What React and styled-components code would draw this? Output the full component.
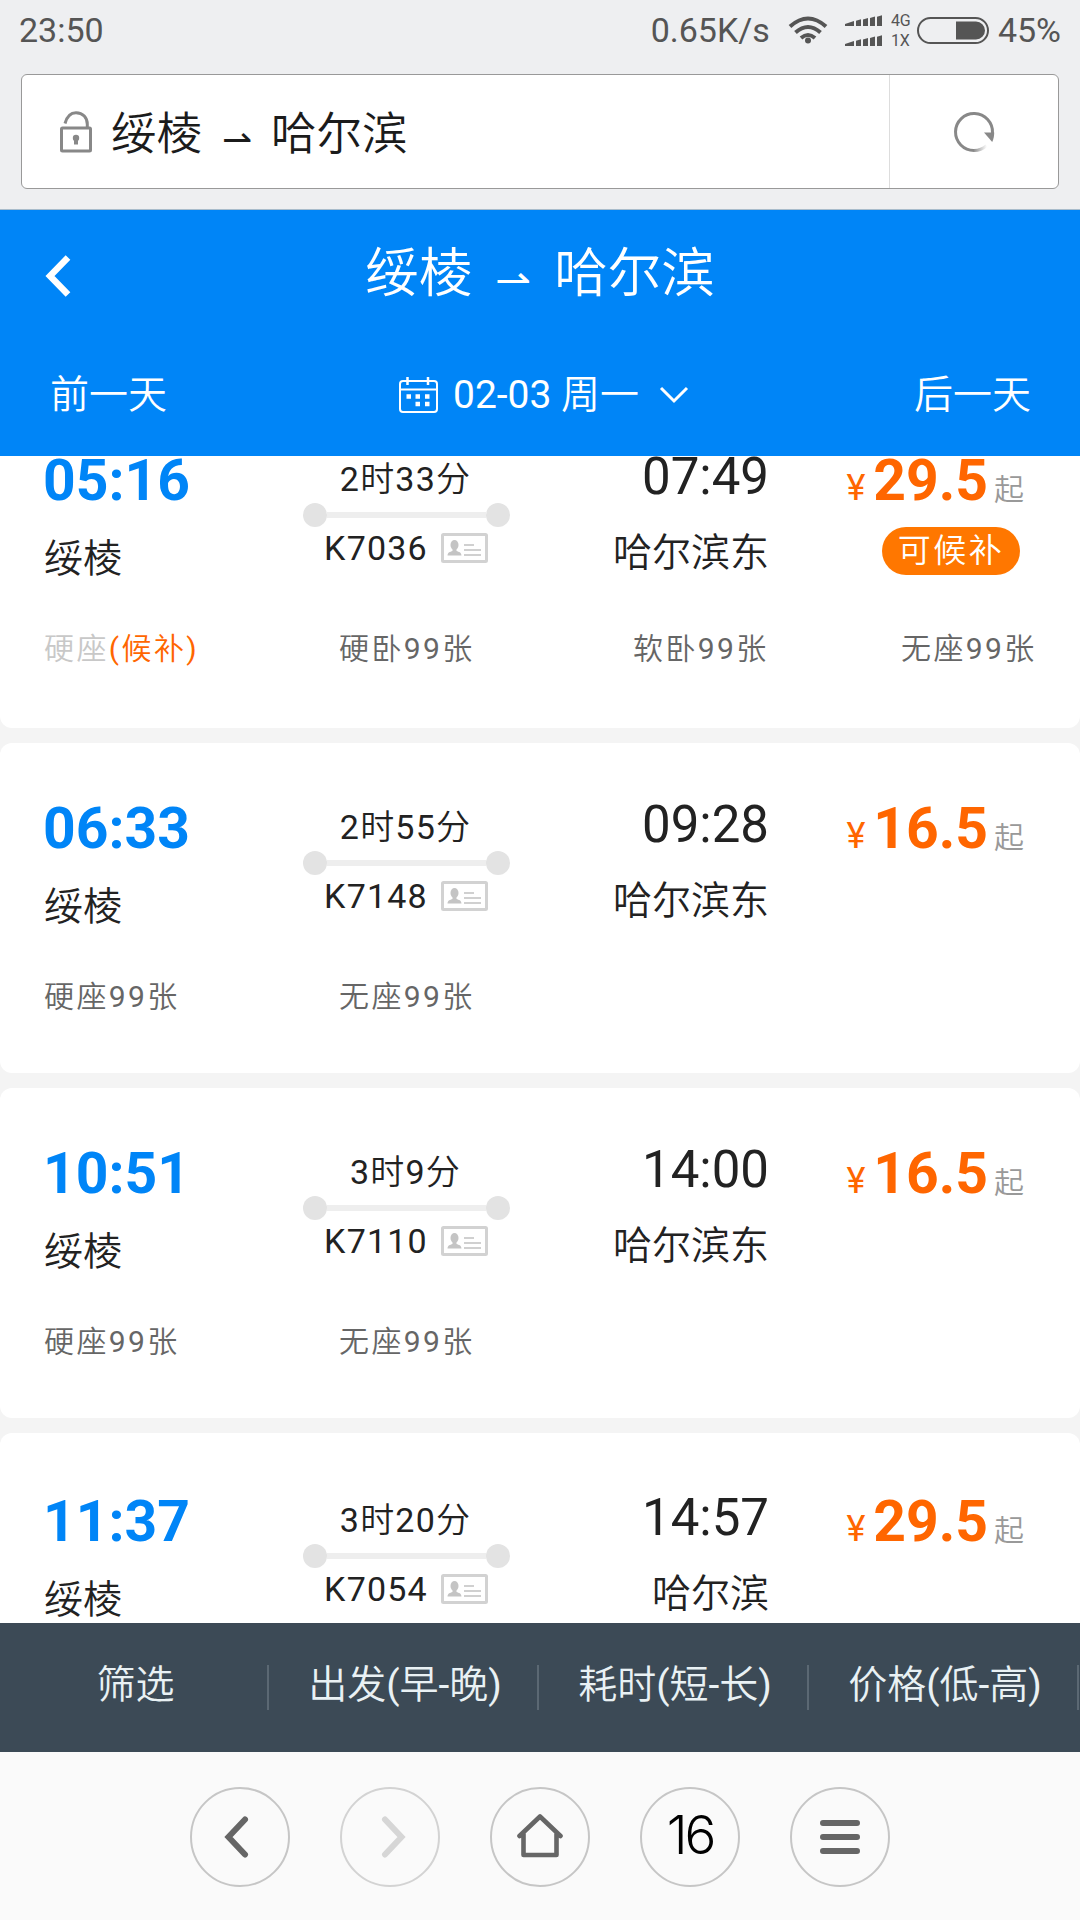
import React from "react";
import styled, { createGlobalStyle } from "styled-components";

const GlobalStyle = createGlobalStyle`
  * {
    box-sizing: border-box;
  }
  body {
    margin: 0;
    background: #f4f4f4;
    font-family: Roboto, "Noto Sans CJK SC DemiLight", "Noto Sans CJK SC", sans-serif;
    font-weight: 400;
    color: #222;
  }
`;

const Screen = styled.div`
  width: 1080px;
  height: 1920px;
  display: flex;
  flex-direction: column;
  overflow: hidden;
`;

const StatusBar = styled.div`
  height: 74px;
  flex: none;
  display: flex;
  align-items: flex-start;
  background: #eeeff1;
  padding: 10px 19px 0;
  font-size: 34px;
  line-height: 41px;
  color: #555;
`;

const Clock = styled.div`
  flex: 1;
`;

const Networks = styled.div`
  display: flex;
  flex-direction: column;
  gap: 4px;
  margin: 3px 0 0 8px;
  font-size: 16px;
  line-height: 16px;
  width: 26px;
`;

const StatusIcon = styled.svg`
  display: block;
  flex: none;
  margin-left: ${({ $left }) => $left}px;
`;

const Percent = styled.div`
  margin-left: 9px;
`;

const AddressArea = styled.div`
  flex: none;
  height: 136px;
  background: #eeeff1;
  border-bottom: 1px solid #a9bccb;
  padding: 0 21px;
`;

const AddressBox = styled.div`
  height: 115px;
  display: flex;
  background: #fff;
  border: 1px solid #999;
  border-radius: 6px;
`;

const AddressText = styled.div`
  flex: 1;
  display: flex;
  align-items: center;
  padding-left: 38px;
  color: #1b1b1b;
  gap: 19px;
`;

const PageName = styled.div`
  font-size: 45.5px;
  font-weight: 350;
  line-height: 66px;
  padding-top: 6px;
`;

const Reload = styled.div`
  width: 169px;
  border-left: 1px solid #ddd;
  display: flex;
  align-items: center;
  justify-content: center;
`;

const Arrow = styled.span`
  display: inline-block;
  width: ${({ $width }) => $width}px;
  text-align: center;
  font-family: "DejaVu Sans", sans-serif;
  font-size: 0.8em;
  line-height: 1;
  vertical-align: -0.07em;
`;

const Header = styled.header`
  flex: none;
  height: 246px;
  background: #0085f7;
  color: #fff;
`;

const TitleRow = styled.div`
  height: 123px;
  display: grid;
  grid-template-columns: 120px 1fr 120px;
`;

const BackButton = styled.div`
  padding: 45px 0 0 45px;
`;

const Title = styled.div`
  text-align: center;
  font-size: 53.5px;
  font-weight: 350;
  line-height: 80px;
  padding-top: 24px;
`;

const DateRow = styled.div`
  height: 123px;
  display: grid;
  grid-template-columns: 300px 1fr 300px;
  align-items: start;
  padding: 32px 49px 0 50px;
  font-size: 39px;
  font-weight: 350;
  line-height: 60px;
`;

const DayLink = styled.div`
  text-align: ${({ $align }) => $align || "left"};
`;

const CurrentDay = styled.div`
  display: flex;
  align-items: center;
  padding-left: 49px;
`;

const DayText = styled.span`
  margin: 0 20px 0 14px;
`;

const DateDigits = styled.span`
  font-weight: 400;
`;

const List = styled.div`
  flex: 1;
  min-height: 0;
  overflow: hidden;
  display: flex;
  flex-direction: column;
  gap: 15px;
`;

const Card = styled.div`
  flex: none;
  height: ${({ $height }) => $height || 330}px;
  margin-top: ${({ $scrolled }) => $scrolled || 0}px;
  background: #fff;
  border-radius: 12px;
  padding: ${({ $top }) => $top || 52}px 0 0 43px;
`;

const Trip = styled.div`
  display: grid;
  grid-template-columns: 260px 207px 259px 1fr;
  height: 163px;
`;

const Departure = styled.div`
  display: flex;
  flex-direction: column;
`;

const DepartTime = styled.div`
  font-size: 57px;
  font-weight: 700;
  line-height: 68px;
  color: #0085f7;
`;

const Station = styled.div`
  font-size: 39px;
  font-weight: 350;
  line-height: 58px;
  margin-top: ${({ $top }) => $top}px;
  padding-left: 1px;
`;

const Middle = styled.div`
  display: flex;
  flex-direction: column;
  align-items: center;
  font-size: 34px;
  letter-spacing: 1.2px;
`;

const Duration = styled.div`
  line-height: 48px;
  margin-top: 8px;
  margin-right: 2px;
`;

const Track = styled.div`
  width: 207px;
  height: 24px;
  display: flex;
  align-items: center;
`;

const Stop = styled.div`
  width: 24px;
  height: 24px;
  border-radius: 50%;
  background: #e3e3e3;
`;

const Rail = styled.div`
  flex: 1;
  height: 6px;
  background: #eee;
`;

const TrainNo = styled.div`
  display: flex;
  align-items: center;
  gap: 13px;
  line-height: 40px;
  margin: 1px 0 0 -1px;
`;

const Arrival = styled.div`
  display: flex;
  flex-direction: column;
  align-items: flex-end;
`;

const ArriveTime = styled.div`
  font-size: 51px;
  line-height: 60px;
`;

const PriceColumn = styled.div`
  display: flex;
  flex-direction: column;
  align-items: flex-end;
  padding-right: 56px;
`;

const Price = styled.div`
  display: flex;
  align-items: baseline;
  line-height: 68px;
  color: #ff6600;
`;

const Currency = styled.span`
  font-size: 36px;
`;

const Amount = styled.span`
  font-size: 57px;
  font-weight: 700;
  margin: 0 6px 0 8px;
`;

const From = styled.span`
  font-size: 30px;
  font-weight: 350;
  color: #999;
`;

const Waitlist = styled.div`
  width: 138px;
  height: 48px;
  border-radius: 24px;
  background: #ff7700;
  color: #fff;
  font-size: 33px;
  font-weight: 350;
  letter-spacing: 2.5px;
  line-height: 48px;
  text-align: center;
  margin: 3px 4px 0 0;
`;

const Seats = styled.div`
  display: grid;
  grid-template-columns: 295px 294px 268px 1fr;
  font-size: 30px;
  letter-spacing: 2.4px;
  line-height: 44px;
  color: #666;
  padding: 17px 0 0 1px;
`;

const SoldOut = styled.span`
  color: #c8c8c8;
`;

const Standby = styled.span`
  color: #ff6600;
`;

const SortBar = styled.div`
  flex: none;
  height: 129px;
  display: grid;
  grid-template-columns: 269px repeat(3, 270px);
  align-items: center;
  background: #3c4a56;
  color: #e9f1f4;
  font-size: 39px;
`;

const SortItem = styled.div`
  height: 45px;
  line-height: 40px;
  text-align: center;
  padding-left: 4px;
  border-right: 2px solid #5b6873;
`;

const NavBar = styled.div`
  flex: none;
  height: 168px;
  background: #fafafa;
  display: flex;
  justify-content: center;
  gap: 50px;
  padding-top: 35px;
`;

const NavButton = styled.div`
  width: 100px;
  height: 100px;
  border-radius: 50%;
  border: 2px solid ${({ $muted }) => ($muted ? "#d3d3d3" : "#c6c6c6")};
  display: flex;
  align-items: center;
  justify-content: center;
`;

const TabCount = styled.span`
  font-family: Inter, sans-serif;
  font-size: 53px;
  font-weight: 350;
  line-height: 1;
  letter-spacing: -3px;
  padding-bottom: 3px;
  color: #000;
`;

const LockIcon = () => (
  <svg width="32" height="42" viewBox="0 0 32 42" fill="none" stroke="#888" strokeWidth="3">
    <path d="M5 12.5C7 5 11 1.7 16 1.7c7 0 11.3 5 11.3 11.5V17" />
    <rect x="1.5" y="17" width="29" height="23" rx="1" />
    <circle cx="16" cy="27" r="3.2" fill="#888" stroke="none" />
    <path d="M16 27v6.5" strokeWidth="4" />
  </svg>
);

const ReloadIcon = () => (
  <svg width="42" height="42" viewBox="0 0 42 42" fill="none">
    <defs>
      <linearGradient id="fade" x1="20" y1="0" x2="34" y2="0" gradientUnits="userSpaceOnUse">
        <stop offset="0" stopColor="#888" />
        <stop offset="1" stopColor="#fff" />
      </linearGradient>
    </defs>
    <path d="M39.5 22A18.5 18.5 0 1 0 21 39.5" stroke="#888" strokeWidth="3" />
    <path d="M21 39.5A18.5 18.5 0 0 0 33.5 34.6" stroke="url(#fade)" strokeWidth="3" />
    <path d="M31 21.5h10.2c0 3.5-.6 6.5-2 9.5z" fill="#888" />
  </svg>
);

const IdCard = () => (
  <svg width="47" height="30" viewBox="0 0 47 30" fill="none">
    <rect x="1.5" y="1.5" width="44" height="27" rx="1" stroke="#d2d2d2" strokeWidth="3" />
    <ellipse cx="13.5" cy="12" rx="4" ry="5" fill="#c4c4c4" />
    <path d="M6.5 22.5c.3-3.5 2.5-3.5 5-4.5v-3h4v3c2.5 1 4.7 1 5 4.5z" fill="#c4c4c4" />
    <path d="M23 12h10M23 17h17M23 22h17" stroke="#d0d0d0" strokeWidth="2" />
  </svg>
);

const trips = [
  {
    depart: "05:16",
    duration: "2时33分",
    train: "K7036",
    arrive: "07:49",
    to: "哈尔滨东",
    price: "29.5",
    waitlist: true,
    seats: ["硬座", "硬卧99张", "软卧99张", "无座99张"],
    height: 333,
    scrolled: -61,
  },
  {
    depart: "06:33",
    duration: "2时55分",
    train: "K7148",
    arrive: "09:28",
    to: "哈尔滨东",
    price: "16.5",
    seats: ["硬座99张", "无座99张"],
  },
  {
    depart: "10:51",
    duration: "3时9分",
    train: "K7110",
    arrive: "14:00",
    to: "哈尔滨东",
    price: "16.5",
    seats: ["硬座99张", "无座99张"],
  },
  {
    depart: "11:37",
    duration: "3时20分",
    train: "K7054",
    arrive: "14:57",
    to: "哈尔滨",
    price: "29.5",
    seats: [],
    top: 55,
  },
];

const TripCard = ({ trip }) => (
  <Card $height={trip.height} $scrolled={trip.scrolled} $top={trip.top}>
    <Trip>
      <Departure>
        <DepartTime>{trip.depart}</DepartTime>
        <Station $top={15}>绥棱</Station>
      </Departure>
      <Middle>
        <Duration>{trip.duration}</Duration>
        <Track>
          <Stop />
          <Rail />
          <Stop />
        </Track>
        <TrainNo>
          {trip.train}
          <IdCard />
        </TrainNo>
      </Middle>
      <Arrival>
        <ArriveTime>{trip.arrive}</ArriveTime>
        <Station $top={17}>{trip.to}</Station>
      </Arrival>
      <PriceColumn>
        <Price>
          <Currency>¥</Currency>
          <Amount>{trip.price}</Amount>
          <From>起</From>
        </Price>
        {trip.waitlist && <Waitlist>可候补</Waitlist>}
      </PriceColumn>
    </Trip>
    <Seats>
      {trip.seats.map((seat, i) =>
        trip.waitlist && i === 0 ? (
          <div key={seat}>
            <SoldOut>{seat}</SoldOut>
            <Standby>(候补)</Standby>
          </div>
        ) : (
          <div key={seat}>{seat}</div>
        )
      )}
    </Seats>
  </Card>
);

const signalBars = [1, 2, 3, 4];

const App = () => {
  return (
    <Screen>
      <GlobalStyle />
      <StatusBar>
        <Clock>23:50</Clock>
        <div>0.65K/s</div>
        <StatusIcon $left={18} width="40" height="41" viewBox="0 0 40 41" fill="none" stroke="#555" strokeWidth="4">
          <path d="M2 16.5Q20 .5 38 16.5M7.5 22.5Q20 11.5 32.5 22.5M13 28Q20 22 27 28" />
          <circle cx="20" cy="30.5" r="3" fill="#555" stroke="none" />
        </StatusIcon>
        <StatusIcon $left={17} width="38" height="41" viewBox="0 0 38 41" fill="#555">
          {[16, 36].map((base) => (
            <g key={base}>
              <path d={`M0 ${base}v-2l9-3v5z`} />
              {signalBars.map((n) => (
                <path
                  key={n}
                  d={`M${4 + n * 7} ${base}v${-4 - n * 1.3}l5-1.5v${5.5 + n * 1.3}z`}
                />
              ))}
            </g>
          ))}
        </StatusIcon>
        <Networks>
          <span>4G</span>
          <span>1X</span>
        </Networks>
        <StatusIcon $left={0} width="72" height="41" viewBox="0 0 72 41">
          <rect x="1" y="8" width="70" height="25" rx="12.5" fill="none" stroke="#555" strokeWidth="2" />
          <path d="M39 11.5h20a9 9 0 0 1 0 18H39z" fill="#555" />
        </StatusIcon>
        <Percent>45%</Percent>
      </StatusBar>

      <AddressArea>
        <AddressBox>
          <AddressText>
            <LockIcon />
            <PageName>
              绥棱<Arrow $width={69}>⇀</Arrow>哈尔滨
            </PageName>
          </AddressText>
          <Reload>
            <ReloadIcon />
          </Reload>
        </AddressBox>
      </AddressArea>

      <Header>
        <TitleRow>
          <BackButton>
            <svg width="26" height="42" viewBox="0 0 26 42" fill="none" stroke="#fff" strokeWidth="6.5">
              <path d="M23 2.5 5 21l18 18.5" />
            </svg>
          </BackButton>
          <Title>
            绥棱<Arrow $width={82}>⇀</Arrow>哈尔滨
          </Title>
        </TitleRow>
        <DateRow>
          <DayLink>前一天</DayLink>
          <CurrentDay>
            <svg width="40" height="38" viewBox="0 0 40 38" fill="none" stroke="#fff" strokeWidth="2">
              <rect x="1" y="5" width="37" height="31" rx="3" />
              <path d="M1 13.5h37" />
              <path d="M8.5 1v8M29 1v8" strokeWidth="2.5" />
              <path d="M7.5 20.5H12M16.5 20.5H21M26 20.5h4.5M16.5 28H21M26 28h4.5" strokeWidth="4.5" />
            </svg>
            <DayText>
              <DateDigits>02-03</DateDigits> 周一
            </DayText>
            <svg width="30" height="18" viewBox="0 0 30 18" fill="none" stroke="#fff" strokeWidth="3">
              <path d="M2 2l13 13L28 2" />
            </svg>
          </CurrentDay>
          <DayLink $align="right">后一天</DayLink>
        </DateRow>
      </Header>

      <List>
        {trips.map((trip) => (
          <TripCard key={trip.depart} trip={trip} />
        ))}
      </List>

      <SortBar>
        <SortItem>筛选</SortItem>
        <SortItem>出发(早-晚)</SortItem>
        <SortItem>耗时(短-长)</SortItem>
        <SortItem>价格(低-高)</SortItem>
      </SortBar>

      <NavBar>
        <NavButton>
          <svg width="32" height="42" viewBox="0 0 32 42" fill="none" stroke="#666" strokeWidth="6" strokeLinecap="round">
            <path d="M21 3.5 4.5 21 21 38.5" />
          </svg>
        </NavButton>
        <NavButton $muted>
          <svg width="32" height="42" viewBox="0 0 32 42" fill="none" stroke="#d6d6d6" strokeWidth="6" strokeLinecap="round">
            <path d="M11 3.5 27.5 21 11 38.5" />
          </svg>
        </NavButton>
        <NavButton>
          <svg width="46" height="48" viewBox="0 0 46 48" fill="none" stroke="#666" strokeWidth="4.6" strokeLinecap="round" strokeLinejoin="round">
            <path d="M2.5 23 23 3.5 43.5 23M6.500 21v21h33V21" />
          </svg>
        </NavButton>
        <NavButton>
          <TabCount>16</TabCount>
        </NavButton>
        <NavButton>
          <svg width="40" height="36" viewBox="0 0 40 36" stroke="#666" strokeWidth="6" strokeLinecap="round">
            <path d="M3 4h34M3 18h34M3 32h34" />
          </svg>
        </NavButton>
      </NavBar>
    </Screen>
  );
};

export default App;
